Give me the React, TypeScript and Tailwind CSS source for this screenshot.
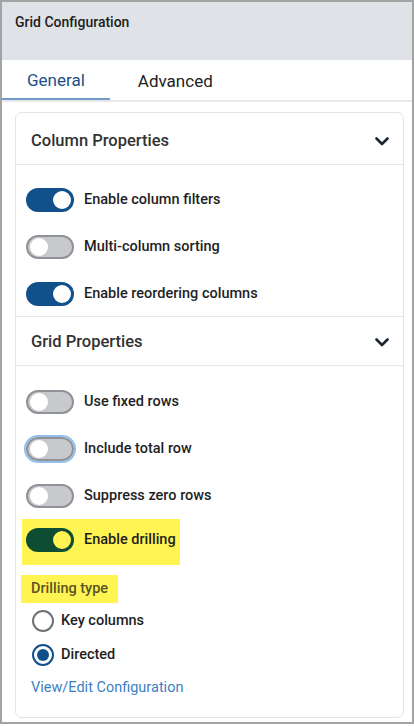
import React from "react";

type ToggleProps = { on?: boolean; focus?: boolean; green?: boolean };

const Toggle = ({ on, focus, green }: ToggleProps) => {
    if (on) {
        return <div className={`w-12 h-6 shrink-0 rounded-full flex items-center justify-end pr-[3px] ${green ? "bg-[#0e4c33]" : "bg-[#12508c]"}`}>
            <div className={`w-[18px] h-[18px] rounded-full ${green ? "bg-[#fff451]" : "bg-white"}`} />
        </div>
    }
    return <div className={`w-12 h-6 shrink-0 rounded-full flex items-center pl-[2px] bg-[#c7c9cd] border-2 border-[#8f9296] ${focus ? "outline-2 outline-[#93c0ea]" : ""}`}>
        <div className="w-[18px] h-[18px] rounded-full bg-white" />
    </div>
}

const Chevron = () => (
    <svg width="14" height="9" viewBox="0 0 14 9" fill="none">
        <polyline points="1.5,1.5 7,7 12.5,1.5" stroke="#1b2632" strokeWidth="2.6" strokeLinecap="round" strokeLinejoin="round" />
    </svg>
)

const ToggleRow = ({ label, ...rest }: ToggleProps & { label: string }) => (
    <div className="flex items-center gap-[10px] h-6">
        <Toggle {...rest} />
        <span className="text-[14.5px] font-medium text-[#1f1f1f]">{label}</span>
    </div>
)

const Radio = ({ checked, label }: { checked?: boolean; label: string }) => (
    <div className="flex items-center gap-[7px] h-[22px] pl-[16px]">
        {checked ? (
            <div className="w-[22px] h-[22px] rounded-full border-2 border-[#12508c] flex items-center justify-center">
                <div className="w-3 h-3 rounded-full bg-[#12508c]" />
            </div>
        ) : (
            <div className="w-[22px] h-[22px] rounded-full border-2 border-[#6e7175]" />
        )}
        <span className="text-[14.5px] font-medium text-[#1f1f1f]">{label}</span>
    </div>
)

export default function App() {
    return <div className="w-full h-[724px] border-2 border-[#a3a3a3] bg-white flex flex-col" style={{ fontFamily: "Roboto, 'Noto Sans', sans-serif" }}>
        <div className="h-[58px] bg-[#dfe2e6] pl-[13px] pt-[12px]">
            <h1 className="text-[14px] leading-4 font-medium text-[#1d1d1d]">Grid Configuration</h1>
        </div>
        <div className="flex flex-row border-b-2 border-[#e8e9eb]">
            <div className="h-10 pt-[3px] px-[25px] flex items-center text-[17px] text-[#1d4f8a] border-b-2 border-[#6f9cc9] -mb-[2px]">General</div>
            <div className="h-10 pt-[3px] pl-[28px] pr-[25px] flex items-center text-[17px] text-[#222]">Advanced</div>
        </div>
        <div className="ml-[13px] mr-[8px] mt-[10px] border border-[#e3e4e6] rounded-[7px] flex flex-col">
            <div className="h-[52px] pt-[5px] pl-[15px] pr-[14px] flex items-center justify-between border-b border-[#e6e7e9]">
                <span className="text-[16.5px] font-medium text-[#333]">Column Properties</span>
                <Chevron />
            </div>
            <div className="px-[10px] pt-[23px] pb-[10px] flex flex-col gap-[23px] border-b border-[#e6e7e9]">
                <ToggleRow on label="Enable column filters" />
                <ToggleRow label="Multi-column sorting" />
                <ToggleRow on label="Enable reordering columns" />
            </div>
            <div className="h-[49px] pt-[3px] pl-[15px] pr-[14px] flex items-center justify-between border-b border-[#e6e7e9]">
                <span className="text-[16.5px] font-medium text-[#333]">Grid Properties</span>
                <Chevron />
            </div>
            <div className="px-[10px] pt-[24px] pb-[19px] flex flex-col">
                <div className="flex flex-col gap-[23px]">
                    <ToggleRow label="Use fixed rows" />
                    <ToggleRow focus label="Include total row" />
                    <ToggleRow label="Suppress zero rows" />
                </div>
                <div className="self-start -ml-[4px] mt-[11px] pl-[4px] pr-[4px] pt-[9px] pb-[13px] bg-[#fff451]">
                    <ToggleRow on green label="Enable drilling" />
                </div>
                <div className="self-start -ml-[5px] mt-[10px] h-7 px-[10px] flex items-center bg-[#fff451]">
                    <span className="text-[14.5px] font-medium text-[#5b5526]">Drilling type</span>
                </div>
                <div className="mt-[7px] flex flex-col gap-3 -ml-[10px]">
                    <Radio label="Key columns" />
                    <Radio checked label="Directed" />
                </div>
                <a className="mt-3 pl-[5px] text-[14.5px] leading-5 text-[#3b7fc3]">View/Edit Configuration</a>
            </div>
        </div>
    </div>
}
